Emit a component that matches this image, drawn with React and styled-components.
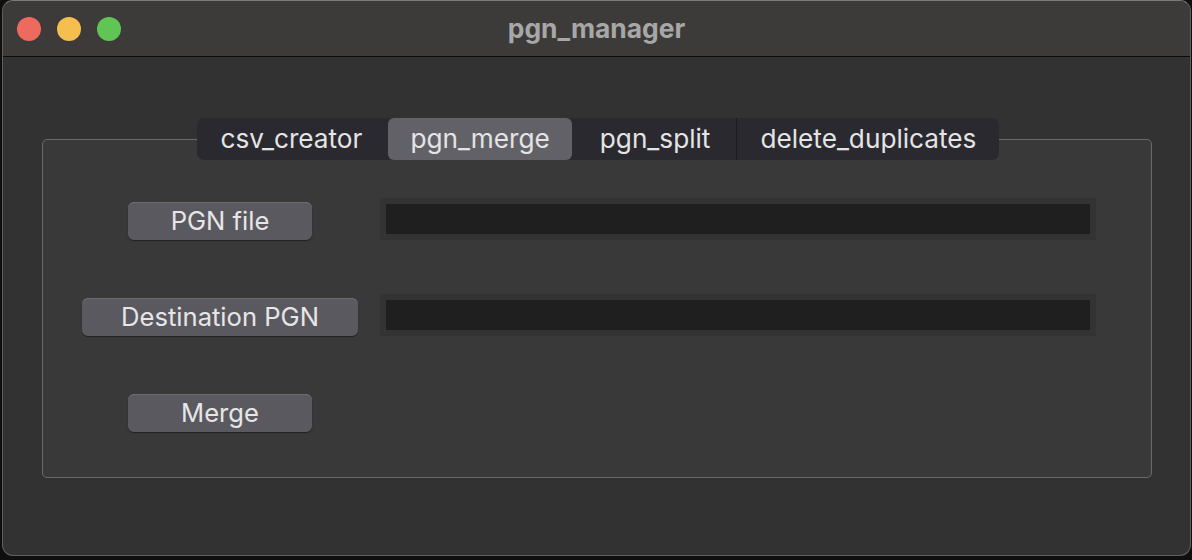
import React, { useState } from "react";
import styled, { createGlobalStyle } from "styled-components";

const Global = createGlobalStyle`
  html, body { margin: 0; padding: 0; background: #0f0f0f; }
  body { font-family: Inter, "Liberation Sans", sans-serif; }
  * { box-sizing: border-box; }
`;

const Window = styled.div`
  margin-left: 2px;
  width: 1189px;
  height: 556px;
  border: 1px solid #5f5f5f;
  border-top-color: #7a7a7a;
  border-radius: 11px;
  background: #323232;
  overflow: hidden;
  display: flex;
  flex-direction: column;
`;

const TitleBar = styled.div`
  height: 56px;
  flex: none;
  background: #3c3b39;
  border-bottom: 1px solid #0c0c0c;
  display: flex;
  align-items: center;
  position: relative;
  padding-left: 14px;
`;

const Lights = styled.div`
  display: flex;
  gap: 16px;
`;

const Light = styled.span`
  width: 24px;
  height: 24px;
  border-radius: 50%;
  background: ${(p) => p.$c};
`;

const Title = styled.div`
  position: absolute;
  inset: 0;
  display: flex;
  align-items: center;
  justify-content: center;
  font-weight: 700;
  font-size: 26.4px;
  color: #a8a7a7;
  pointer-events: none;
  padding-bottom: 1px;
`;

const Content = styled.div`
  flex: 1;
  padding: 61px 38px 0 39px;
  display: flex;
  flex-direction: column;
  align-items: stretch;
`;

const TabBar = styled.div`
  align-self: center;
  display: flex;
  height: 42px;
  margin-left: 2px;
  position: relative;
  z-index: 1;
  background: #2a2930;
  border-radius: 7px;
  color: #e4e4e4;
  font-size: 26.2px;
`;

const Tab = styled.div`
  display: flex;
  align-items: center;
  padding: 0 ${(p) => p.$px}px 1px;
  border-radius: ${(p) => (p.$active ? "6px" : "0")};
  background: ${(p) => (p.$active ? "#636168" : "transparent")};
  margin: ${(p) => (p.$active ? "0 2px" : "0")};
  border-left: ${(p) => (p.$sep ? "1px solid #1c1b21" : "0")};
  cursor: default;
`;

const Group = styled.div`
  margin-top: -21px;
  border: 1px solid #6a6a6a;
  border-radius: 5px;
  background: #393939;
  padding: 58px 0 45px 39px;
  display: grid;
  grid-template-columns: 276px 716px;
  grid-auto-rows: 42px;
  column-gap: 22px;
  row-gap: 54px;
`;

const Button = styled.button`
  justify-self: center;
  align-self: end;
  width: ${(p) => p.$w}px;
  height: 38px;
  border: 0;
  border-radius: 6px;
  background: #5b5960;
  box-shadow: inset 0 1px 0 #6e6c73, 0 1px 1px rgba(0, 0, 0, 0.45);
  color: #e6e6e6;
  font-family: Inter, "Liberation Sans", sans-serif;
  font-size: 25.6px;
  padding: 0 0 2px;
`;

const Field = styled.div`
  background: #333333;
  padding: 6px;
  display: flex;
`;

const FieldInner = styled.input`
  flex: 1;
  border: 0;
  outline: none;
  background: #1f1f1f;
  color: #e6e6e6;
  font-size: 20px;
  padding: 0 8px;
`;

const tabs = [
  { id: "csv_creator", px: 24 },
  { id: "pgn_merge", px: 22 },
  { id: "pgn_split", px: 26 },
  { id: "delete_duplicates", px: 23 },
];

export default function App() {
  const [active, setActive] = useState("pgn_merge");
  return (
    <>
      <Global />
      <Window>
        <TitleBar>
          <Lights>
            <Light $c="#ee6a5f" />
            <Light $c="#f5be4f" />
            <Light $c="#61c554" />
          </Lights>
          <Title>pgn_manager</Title>
        </TitleBar>
        <Content>
          <TabBar>
            {tabs.map((t, i) => {
              const prev = tabs[i - 1];
              const sep = i > 0 && t.id !== active && prev.id !== active;
              return (
                <Tab
                  key={t.id}
                  $px={t.px}
                  $active={t.id === active}
                  $sep={sep}
                  onClick={() => setActive(t.id)}
                >
                  {t.id}
                </Tab>
              );
            })}
          </TabBar>
          <Group>
            <Button $w={184}>PGN file</Button>
            <Field>
              <FieldInner />
            </Field>
            <Button $w={276}>Destination PGN</Button>
            <Field>
              <FieldInner />
            </Field>
            <Button $w={184}>Merge</Button>
          </Group>
        </Content>
      </Window>
    </>
  );
}
